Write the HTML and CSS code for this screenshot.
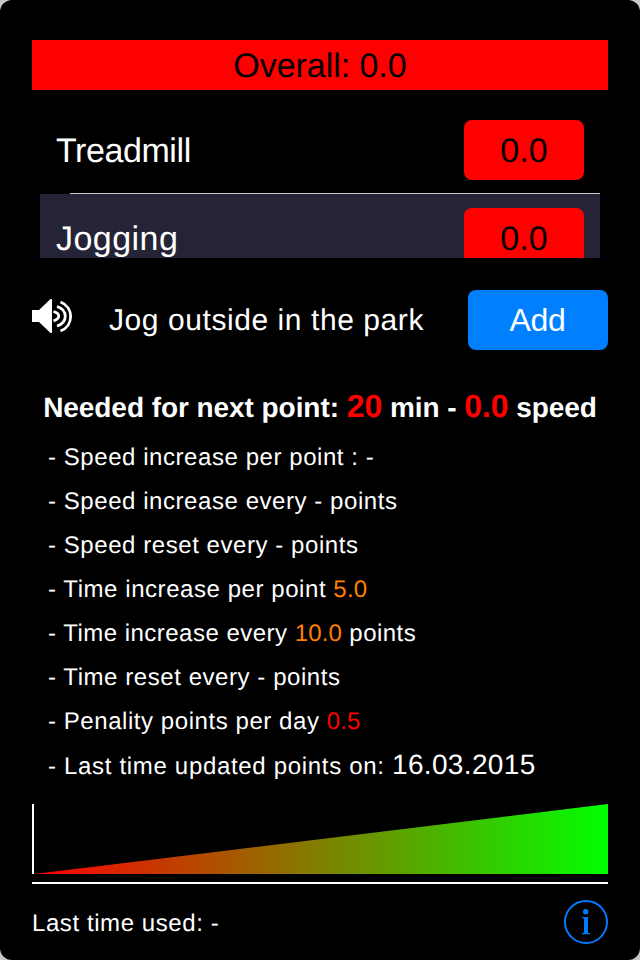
FILE: index.html
```html
<!DOCTYPE html>
<html lang="en"><head><meta charset="utf-8"><title>Exercise points</title><link rel="stylesheet" href="styles.css"></head>
<body><main class="screen">
<header class="overall">Overall: 0.0</header>
<section class="list">
<div class="row"><span class="treadmill">Treadmill</span><span class="score">0.0</span></div>
<div class="row selected"><span class="jogging">Jogging</span><span class="score">0.0</span></div>
</section>
<section class="action">
<svg class="speaker" viewBox="0 0 42 36"><path fill="#fff" d="M0 12h7L18.500 1H20v34h-1.500L7 24H0z"/><g fill="none" stroke="#fff" stroke-width="2.8"><path d="M21.500 13.500c7 2 7 7 0 9.500M25 8.500c11 3.500 11 16 0 19.500M28.500 4c13.500 5 13.500 24 0 29"/></g></svg>
<span class="description">Jog outside in the park</span><button class="add">Add</button></section>
<h1 class="needed">Needed for next point: <b>20</b> min - <b>0.0</b> speed</h1>
<ul class="details">
<li>- Speed increase per point : -</li><li>- Speed increase every - points</li><li>- Speed reset every - points</li>
<li>- Time increase per point <span class="orange">5.0</span></li><li class="tight">- Time increase every <span class="orange">10.0</span> points</li><li>- Time reset every - points</li>
<li>- Penality points per day <span class="red">0.5</span></li><li class="updated">- Last time updated points on: <span class="date">16.03.2015</span></li></ul>
<div class="chart"><div class="ramp"></div></div>
<footer class="footer"><span>Last time used: -</span><svg class="info" viewBox="0 0 44 44"><circle cx="22" cy="22" r="21" fill="none" stroke="#007aff" stroke-width="2"/><circle cx="21.700" cy="11.700" r="2.700" fill="#007aff"/><path fill="#007aff" d="M18 17h6v16h2v1.300h-8V33h2V18.300h-2z"/></svg></footer>
</main></body></html>
```
FILE: styles.css
```css
*{box-sizing:border-box}
body{margin:0;background:#c8c8c8;font-family:"Liberation Sans",Arial,sans-serif;color:#fff;text-rendering:geometricPrecision}
.screen{width:640px;height:960px;background:#000;border-radius:12px;padding:40px 32px 0;overflow:hidden}
.overall{height:50px;background:red;color:#000;font-size:34px;line-height:53px;text-align:center;letter-spacing:-.05px}
.list{height:152px;margin:16px 8px 0;overflow:hidden}
.row{height:88px;display:flex;justify-content:space-between;padding:14px 16px;font-size:34px;line-height:62px;background:linear-gradient(#c8c7cc,#c8c7cc) 30px 100%/530px 1px no-repeat}
.row.selected{background:#252436}
.treadmill{letter-spacing:-.42px}
.jogging{letter-spacing:.45px}
.score{width:120px;height:60px;border-radius:8px;background:red;color:#000;text-align:center}
.action{display:flex;margin-top:32px;height:60px;align-items:center}
.speaker{width:42px;height:36px;margin-bottom:8px}
.description{font-size:30px;margin-left:35px;padding-top:2px;letter-spacing:.57px}
.add{margin-left:auto;width:140px;height:60px;border:0;border-radius:8px;background:#007fff;color:#fff;font:32px "Liberation Sans",Arial,sans-serif;letter-spacing:-.3px;padding:1px 1px 0 0}
.needed{margin:36px 0 0;font-size:28px;line-height:40px;text-align:center;white-space:nowrap;letter-spacing:-.06px}
.needed b{color:red;font-size:32px}
.details{height:368px;list-style:none;margin:8px 0 0;padding:0 16px;font-size:24px;line-height:44px;letter-spacing:.56px}
.details li{height:44px}
.details .tight{letter-spacing:.48px}
.details .updated{line-height:42px;letter-spacing:.68px}
.orange,.red{letter-spacing:.2px}
.orange{color:#ff8000}
.red{color:red}
.date{font-size:28px;letter-spacing:.35px}
.chart{height:70px;border-left:2px solid #fff}
.ramp{height:70px;background:linear-gradient(90deg,red,lime);clip-path:polygon(0 100%,100% 0,100% 100%)}
.footer{border-top:2px solid #fff;margin-top:8px;padding-top:16px;display:flex;justify-content:space-between;align-items:center;font-size:24px;letter-spacing:.58px}
.footer span{padding-top:3px}
.info{width:44px;height:44px}
```
